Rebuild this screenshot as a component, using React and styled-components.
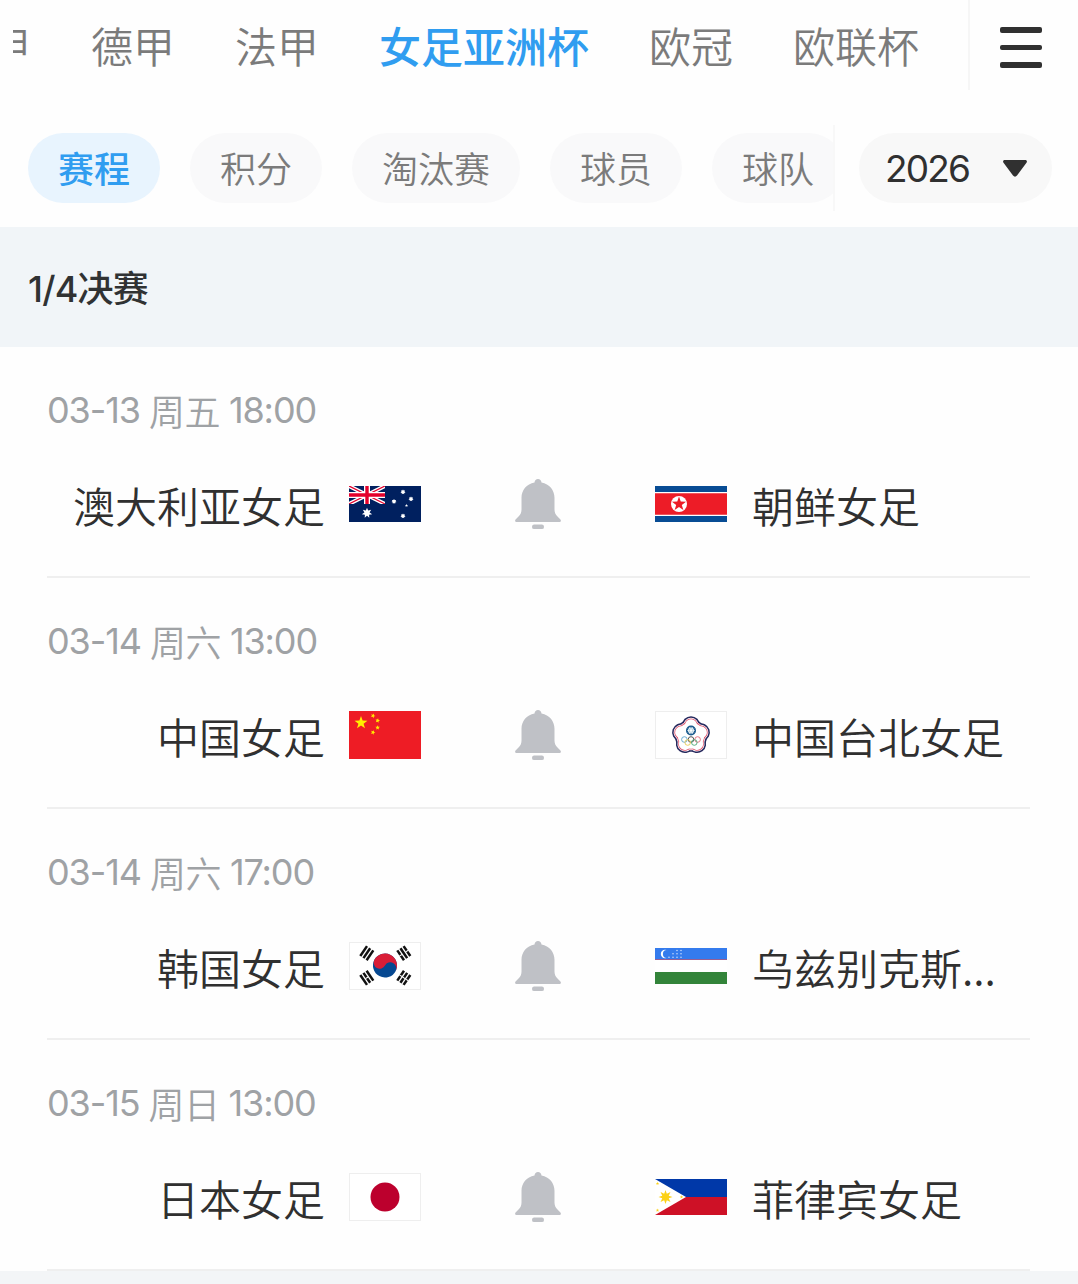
import React, { useState } from "react";
import styled, { createGlobalStyle } from "styled-components";

const GlobalStyle = createGlobalStyle`
  * {
    box-sizing: border-box;
  }
  body {
    margin: 0;
    background: #fefefe;
    font-family: Inter, "Noto Sans CJK SC", sans-serif;
    color: #303233;
  }
`;

const Page = styled.div`
  width: 1078px;
  height: 1284px;
  overflow: hidden;
  display: flex;
  flex-direction: column;
`;

const LeagueBar = styled.nav`
  display: flex;
  height: 90px;
  padding-left: 13px;
`;

const LeagueList = styled.div`
  display: flex;
  align-items: center;
  gap: 60px;
  width: 955px;
  height: 90px;
  overflow: hidden;
`;

const League = styled.a`
  flex: none;
  display: flex;
  justify-content: flex-end;
  width: ${(props) => (props.$cut ? "18px" : "auto")};
  overflow: ${(props) => (props.$cut ? "hidden" : "visible")};
  font-size: 42px;
  line-height: 62px;
  font-family: "Noto Sans CJK SC", sans-serif;
  font-weight: ${(props) => (props.$active ? 500 : 350)};
  color: ${(props) => (props.$active ? "#309df0" : "#7b7b7b")};
  cursor: pointer;
`;

const MenuButton = styled.button`
  flex: 1;
  display: flex;
  flex-direction: column;
  gap: 12px;
  padding: 27px 0 0 30px;
  border: 0;
  border-left: 2px solid #f6f6f6;
  background: none;
`;

const MenuLine = styled.span`
  width: 42px;
  height: 5.500px;
  border-radius: 2px;
  background: #303030;
`;

const FilterBar = styled.div`
  display: flex;
  align-items: center;
  height: 137px;
  padding: 18px 26px 0 28px;
`;

const ChipList = styled.div`
  display: flex;
  align-items: center;
  gap: 30px;
  width: 807px;
  height: 86px;
  overflow: hidden;
  border-right: 2px solid #f8f8f8;
`;

const Chip = styled.button`
  flex: none;
  height: 70px;
  padding: 0 30px 2px;
  border: 0;
  border-radius: 35px;
  font-family: "Noto Sans CJK SC", sans-serif;
  font-size: 36px;
  font-weight: ${(props) => (props.$active ? 500 : 350)};
  color: ${(props) => (props.$active ? "#309df0" : "#7b7b7b")};
  background: ${(props) => (props.$active ? "#e8f4fe" : "#f9f9fa")};
`;

const YearSelect = styled.button`
  display: flex;
  align-items: center;
  justify-content: space-between;
  width: 193px;
  height: 70px;
  margin-left: 24px;
  padding: 1px 25px 0 26px;
  border: 0;
  border-radius: 35px;
  background: #f8f8f8;
  font-family: Inter, sans-serif;
  font-size: 37px;
  font-weight: 400;
  letter-spacing: -1.8px;
  color: #303030;
`;

const RoundTitle = styled.h2`
  display: flex;
  align-items: center;
  height: 120px;
  margin: 0;
  padding: 0 28px 2px;
  background: #f1f5f8;
  font-size: 36px;
  font-weight: 500;
  letter-spacing: -0.8px;
`;

const Match = styled.section`
  height: 231px;
  margin: 0 48px 0 47px;
  padding-top: 37px;
  border-bottom: 2px solid #efefef;
`;

const Kickoff = styled.div`
  display: flex;
  gap: 9px;
  height: 52px;
  line-height: 52px;
  font-size: 36px;
  font-weight: 400;
  letter-spacing: -1.1px;
  color: #9fa2a5;
`;

const Weekday = styled.span`
  font-family: "Noto Sans CJK SC", sans-serif;
  font-weight: 350;
  letter-spacing: -0.5px;
`;

const Teams = styled.div`
  display: grid;
  grid-template-columns: 374px 234px 1fr;
  align-items: center;
  height: 70px;
  margin-top: 33px;
`;

const Team = styled.div`
  display: flex;
  align-items: center;
  justify-content: ${(props) => (props.$home ? "flex-end" : "flex-start")};
  gap: ${(props) => (props.$home ? "24px" : "25px")};
`;

const TeamName = styled.span`
  padding-top: 2px;
  font-size: 42px;
  line-height: 62px;
  font-family: "Noto Sans CJK SC", sans-serif;
  font-weight: 350;
  white-space: nowrap;
  color: #303030;
`;

const Flag = styled.svg`
  flex: none;
  display: block;
  width: 72px;
  height: ${(props) => props.$height}px;
  outline: ${(props) => (props.$framed ? "1px solid #eeeeee" : "none")};
  outline-offset: -1px;
`;

const BellIcon = styled.svg`
  display: block;
  width: 46px;
  height: 51px;
  justify-self: center;
`;

const Footer = styled.div`
  flex: 1;
  background: #f3f5f7;
`;

const star = (cx, cy, r, points = 5, inner = 0.4, turn = 0) =>
  Array.from({ length: points * 2 }, (_, i) => {
    const radius = i % 2 ? r * inner : r;
    const angle = (Math.PI * i) / points - Math.PI / 2 + turn;
    return `${cx + radius * Math.cos(angle)},${cy + radius * Math.sin(angle)}`;
  }).join(" ");

const Australia = () => (
  <Flag $height={36} viewBox="0 0 72 36">
    <path fill="#00205f" d="M0 0h72v36H0z" />
    <path stroke="#fff" strokeWidth="4" d="M0 0l36 18M36 0L0 18" />
    <path stroke="#e4002b" strokeWidth="1.3" d="M0 0l36 18M36 0L0 18" />
    <path stroke="#fff" strokeWidth="6" d="M18 0v18M0 9h36" />
    <path stroke="#e4002b" strokeWidth="3.4" d="M18 0v18M0 9h36" />
    <path fill="#00205f" d="M0 18h37v3H0zM36 0h3v18h-3z" />
    <g fill="#fff">
      <polygon points={star(18, 27, 5.3, 7, 0.5)} />
      <polygon points={star(54, 6, 2.6, 7, 0.6)} />
      <polygon points={star(45, 15.5, 2.6, 7, 0.6)} />
      <polygon points={star(62, 13, 2.6, 7, 0.6)} />
      <polygon points={star(54, 30, 2.6, 7, 0.6)} />
      <polygon points={star(57.5, 19.5, 1.7)} />
    </g>
  </Flag>
);

const NorthKorea = () => (
  <Flag $height={36} viewBox="0 0 72 36">
    <path fill="#fff" d="M0 0h72v36H0z" />
    <path fill="#084c94" d="M0 0h72v6H0zM0 30h72v6H0z" />
    <path fill="#ed1c27" d="M0 7.2h72v21.6H0z" />
    <circle cx="24" cy="18" r="8" fill="#fff" />
    <polygon fill="#ed1c27" points={star(24, 18, 7.4)} />
  </Flag>
);

const China = () => (
  <Flag $height={48} viewBox="0 0 72 48">
    <path fill="#ee1c25" d="M0 0h72v48H0z" />
    <g fill="#ffee00">
      <polygon points={star(12, 11.8, 6.8)} />
      <polygon points={star(24, 4.8, 2.4, 5, 0.45, 0.4)} />
      <polygon points={star(28.6, 9.6, 2.4, 5, 0.45, 0.2)} />
      <polygon points={star(28.6, 16.6, 2.4, 5, 0.45)} />
      <polygon points={star(24, 21.4, 2.4, 5, 0.45, 0.4)} />
    </g>
  </Flag>
);

const petals = [0, 72, 144, 216, 288];

const ChineseTaipei = () => (
  <Flag $height={48} $framed viewBox="0 0 72 48">
    <path fill="#fff" d="M0 0h72v48H0z" />
    {[
      ["#25275c", 9],
      ["#fff", 7.5],
      ["#e0566e", 6.8],
      ["#fff", 6],
    ].map(([color, r]) => (
      <g key={color + r} fill={color}>
        <circle cx="36" cy="24.6" r={r + 7.2} />
        {petals.map((deg) => (
          <circle key={deg} cx="36" cy="14.2" r={r} transform={`rotate(${deg} 36 24.6)`} />
        ))}
      </g>
    ))}
    <circle cx="36" cy="19.5" r="5" fill="#16588c" />
    <polygon fill="#fff" points={star(36, 19.5, 4, 12, 0.65)} />
    <circle cx="36" cy="19.5" r="1.8" fill="#fff" stroke="#68a6bf" strokeWidth=".5" />
    <g fill="none" strokeWidth=".9">
      <circle cx="29.4" cy="28.5" r="2.8" stroke="#5aa4cc" />
      <circle cx="36" cy="28.5" r="2.8" stroke="#444" />
      <circle cx="42.6" cy="28.5" r="2.8" stroke="#e26879" />
      <circle cx="32.7" cy="31.5" r="2.8" stroke="#e9c94f" />
      <circle cx="39.3" cy="31.5" r="2.8" stroke="#4ca875" />
    </g>
  </Flag>
);

// x, y, rotation and which of the three bars are broken
const trigrams = [
  [17.8, 11.2, -56, []],
  [54.8, 11.2, 56, [-3.8, 3.8]],
  [17.8, 35.8, 56, [0]],
  [54.8, 35.8, -56, [-3.8, 0, 3.8]],
];

const SouthKorea = () => (
  <Flag $height={48} $framed viewBox="0 0 72 48">
    <path fill="#fff" d="M0 0h72v48H0z" />
    <g transform="translate(36 23.5) rotate(28)">
      <circle r="12" fill="#064891" />
      <path fill="#d91d37" d="M-12 0A12 12 0 0 1 12 0A6 6 0 0 0 0 0A6 6 0 0 1 -12 0z" />
    </g>
    {trigrams.map(([x, y, deg, split]) => (
      <g key={`${x}-${y}`} transform={`translate(${x} ${y}) rotate(${deg})`}>
        {[-3.8, 0, 3.8].map((offset) => (
          <path key={offset} stroke="#111" strokeWidth="2.5" d={`M-6 ${offset}h12`} />
        ))}
        {split.map((offset) => (
          <path key={offset} stroke="#fff" strokeWidth="3" d={`M-.5 ${offset}h1`} />
        ))}
      </g>
    ))}
  </Flag>
);

const Uzbekistan = () => (
  <Flag $height={36} viewBox="0 0 72 36">
    <path fill="#fff" d="M0 0h72v36H0z" />
    <path fill="#347bed" d="M0 0h72v11.4H0z" />
    <path fill="#974071" d="M0 11.2h72v.9H0z" />
    <path fill="#33843a" d="M0 24h72v12H0z" />
    <circle cx="10" cy="6" r="4.2" fill="#fff" />
    <circle cx="11.8" cy="6" r="3.9" fill="#347bed" />
    <g fill="#cfe0ff">
      {[
        [26, 2.4], [22, 5.8], [26, 5.8], [18, 9.2], [22, 9.2], [26, 9.2],
        [22, 2.4], [18, 5.8], [14, 9.2],
      ].map(([x, y]) => (
        <circle key={`${x}-${y}`} cx={x} cy={y} r=".75" />
      ))}
    </g>
  </Flag>
);

const Japan = () => (
  <Flag $height={48} $framed viewBox="0 0 72 48">
    <path fill="#fff" d="M0 0h72v48H0z" />
    <circle cx="36" cy="24" r="14.5" fill="#bc002d" />
  </Flag>
);

const Philippines = () => (
  <Flag $height={36} viewBox="0 0 72 36">
    <path fill="#0038a8" d="M0 0h72v18H0z" />
    <path fill="#ce1126" d="M0 18h72v18H0z" />
    <path fill="#fff" d="M0 0l31 18L0 36z" />
    <g fill="#fcd116">
      <polygon points={star(10.5, 18, 7, 8, 0.5)} />
      <polygon points={star(2.5, 4.6, 1.8)} />
      <polygon points={star(2.5, 31.4, 1.8)} />
      <polygon points={star(26.5, 18, 1.8)} />
    </g>
  </Flag>
);

const Bell = () => (
  <BellIcon viewBox="0 0 46 51" fill="#bfc1c6">
    <path d="M23 0c-2 0-3.200 1.300-3.500 3.500C11.500 5 6.500 11 6.500 19v11.500c0 3-1 5-3 7L.8 40.200C-.6 41.700.2 43 1.800 43h42.400c1.600 0 2.400-1.300 1-2.800l-2.700-2.700c-2-2-3-4-3-7V19c0-8-5-14-13-15.500C26.200 1.300 25 0 23 0z" />
    <rect x="17" y="45.500" width="12" height="4.600" rx="2.200" />
  </BellIcon>
);

const leagues = ["德甲", "法甲", "女足亚洲杯", "欧冠", "欧联杯"];
const filters = ["赛程", "积分", "淘汰赛", "球员", "球队"];

const matches = [
  {
    date: "03-13",
    day: "周五",
    time: "18:00",
    home: "澳大利亚女足",
    homeFlag: <Australia />,
    away: "朝鲜女足",
    awayFlag: <NorthKorea />,
  },
  {
    date: "03-14",
    day: "周六",
    time: "13:00",
    home: "中国女足",
    homeFlag: <China />,
    away: "中国台北女足",
    awayFlag: <ChineseTaipei />,
  },
  {
    date: "03-14",
    day: "周六",
    time: "17:00",
    home: "韩国女足",
    homeFlag: <SouthKorea />,
    away: "乌兹别克斯...",
    awayFlag: <Uzbekistan />,
  },
  {
    date: "03-15",
    day: "周日",
    time: "13:00",
    home: "日本女足",
    homeFlag: <Japan />,
    away: "菲律宾女足",
    awayFlag: <Philippines />,
  },
];

const App = () => {
  const [league, setLeague] = useState("女足亚洲杯");
  const [filter, setFilter] = useState("赛程");

  return (
    <Page>
      <GlobalStyle />
      <LeagueBar>
        <LeagueList>
          <League $cut>甲</League>
          {leagues.map((name) => (
            <League key={name} $active={name === league} onClick={() => setLeague(name)}>
              {name}
            </League>
          ))}
        </LeagueList>
        <MenuButton>
          <MenuLine />
          <MenuLine />
          <MenuLine />
        </MenuButton>
      </LeagueBar>
      <FilterBar>
        <ChipList>
          {filters.map((name) => (
            <Chip key={name} $active={name === filter} onClick={() => setFilter(name)}>
              {name}
            </Chip>
          ))}
        </ChipList>
        <YearSelect>
          2026
          <svg width="24" height="17" viewBox="0 0 24 17">
            <path fill="#303030" d="M2 0h20c2 0 2.500 1.500 1.300 3L14 15.500c-1.200 1.500-2.800 1.500-4 0L.7 3C-.5 1.500 0 0 2 0z" />
          </svg>
        </YearSelect>
      </FilterBar>
      <RoundTitle>1/4决赛</RoundTitle>
      {matches.map((match) => (
        <Match key={match.home}>
          <Kickoff>
            <span>{match.date}</span>
            <Weekday>{match.day}</Weekday>
            <span>{match.time}</span>
          </Kickoff>
          <Teams>
            <Team $home>
              <TeamName>{match.home}</TeamName>
              {match.homeFlag}
            </Team>
            <Bell />
            <Team>
              {match.awayFlag}
              <TeamName>{match.away}</TeamName>
            </Team>
          </Teams>
        </Match>
      ))}
      <Footer />
    </Page>
  );
};

export default App;
